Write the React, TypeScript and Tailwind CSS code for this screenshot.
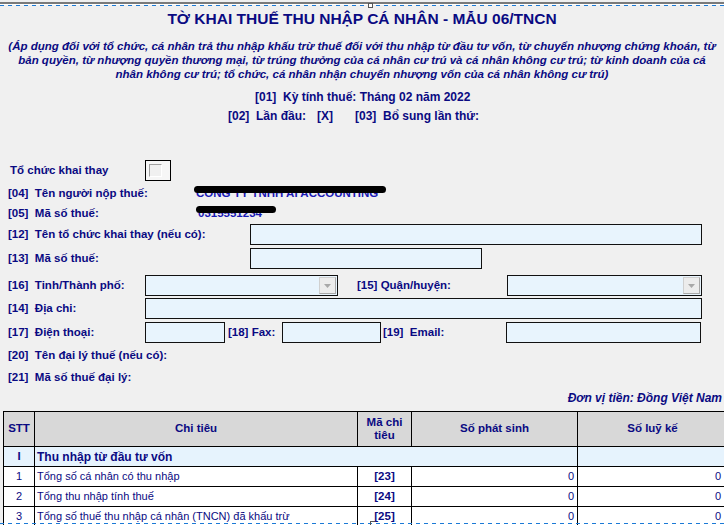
import React from 'react';

const navy = 'text-[#0a0a82]';

function Box({ className = '' }: { className?: string }) {
  return <div className={`h-[21px] border border-[#111] bg-[#e8f4fd] ${className}`} />;
}

function Select({ className = '' }: { className?: string }) {
  return (
    <div className={`h-[21px] border border-[#111] bg-[#e8f4fd] flex justify-end items-center pr-[1px] ${className}`}>
      <div className="w-[17px] h-[17px] bg-[#ececec] border border-[#d0d0d0] border-r-[#a8a8a8] border-b-[#a8a8a8] flex items-center justify-center">
        <svg width="7" height="4" viewBox="0 0 7 4"><path d="M0 0h7L3.5 4z" fill="#a8a8a8" /></svg>
      </div>
    </div>
  );
}

function Redacted({ text, barW }: { text: string; barW: number }) {
  return (
    <span className="relative inline-block text-[#1a1ab4] font-bold">
      {text}
      <span className="absolute left-[-2px] top-[1px] h-[7px] rounded-full bg-black" style={{ width: barW }} />
    </span>
  );
}

const dashed = 'h-[1px] bg-[repeating-linear-gradient(to_right,#1b7ad6_0_4px,transparent_4px_8px)]';

export default function App() {
  const rows = [
    { n: '1', t: 'Tổng số cá nhân có thu nhập', c: '[23]' },
    { n: '2', t: 'Tổng thu nhập tính thuế', c: '[24]' },
    { n: '3', t: 'Tổng số thuế thu nhập cá nhân (TNCN) đã khấu trừ', c: '[25]' },
  ];
  return (
    <div className={`relative w-[724px] h-[525px] overflow-hidden bg-[#f0f0f0] font-['Liberation_Sans',Arial,sans-serif] text-[11.5px] ${navy}`}>
      {/* top frame */}
      <div className="h-[2px]" />
      <div className="h-[2px] bg-[#7a7a7a]" />
      <div className="h-[1px] bg-white" />
      <div className={dashed} />

      <div className="h-[26px] flex items-center justify-center text-[15.5px] font-bold">
        TỜ KHAI THUẾ THU NHẬP CÁ NHÂN - MẪU 06/TNCN
      </div>

      <div className="mt-[7px] flex flex-col items-center text-[11.5px] leading-[14px] font-bold italic whitespace-nowrap">
        <span>(Áp dụng đối với tổ chức, cá nhân trả thu nhập khấu trừ thuế đối với thu nhập từ đầu tư vốn, từ chuyển nhượng chứng khoán, từ</span>
        <span>bản quyền, từ nhượng quyền thương mại, từ trúng thưởng của cá nhân cư trú và cá nhân không cư trú; từ kinh doanh của cá</span>
        <span>nhân không cư trú; tổ chức, cá nhân nhận chuyển nhượng vốn của cá nhân không cư trú)</span>
      </div>

      <div className="mt-[6px] h-[19px] flex items-center pl-[255px] text-[12px] font-bold whitespace-pre">
        {'[01]  Kỳ tính thuế: Tháng 02 năm 2022'}
      </div>
      <div className="h-[20px] flex items-center pl-[228px] text-[12px] font-bold whitespace-pre">
        <span className="w-[28px]">[02]</span>
        <span className="w-[61px]">Lần đầu:</span>
        <span className="w-[38px]">[X]</span>
        <span className="w-[28px]">[03]</span>
        <span>Bổ sung lần thứ:</span>
      </div>

      <div className="mt-[34px] h-[21px] flex items-center font-bold">
        <span className="pl-[10px] w-[145px]">Tổ chức khai thay</span>
        <div className="w-[26px] h-[21px] border border-black bg-[#f6f6f6] flex items-center pl-[3px]">
          <div className="w-[13px] h-[13px] border border-[#a0a0a0] border-r-white border-b-white bg-[#f0f0f0]" />
        </div>
      </div>

      <div className="mt-[3px] h-[20px] flex items-center font-bold whitespace-pre pl-[8px]">
        <span className="w-[188px]">{'[04]  Tên người nộp thuế:'}</span>
        <Redacted text="CÔNG TY TNHH AI ACCOUNTING" barW={192} />
      </div>
      <div className="h-[20px] flex items-center font-bold whitespace-pre pl-[8px]">
        <span className="w-[190px]">{'[05]  Mã số thuế:'}</span>
        <Redacted text="0315551234" barW={80} />
      </div>

      <div className="h-[21px] flex items-center font-bold whitespace-pre pl-[8px]">
        <span className="w-[242px]">{'[12]  Tên tổ chức khai thay (nếu có):'}</span>
        <Box className="w-[452px]" />
      </div>
      <div className="mt-[3px] h-[21px] flex items-center font-bold whitespace-pre pl-[8px]">
        <span className="w-[242px]">{'[13]  Mã số thuế:'}</span>
        <Box className="w-[232px]" />
      </div>

      <div className="mt-[6px] h-[21px] flex items-center font-bold whitespace-pre pl-[8px]">
        <span className="w-[137px]">{'[16]  Tinh/Thành phố:'}</span>
        <Select className="w-[193px]" />
        <span className="ml-[19px] w-[150px]">{'[15] Quận/huyện:'}</span>
        <Select className="w-[195px]" />
      </div>
      <div className="mt-[2px] h-[21px] flex items-center font-bold whitespace-pre pl-[8px]">
        <span className="w-[137px]">{'[14]  Địa chi:'}</span>
        <Box className="w-[557px]" />
      </div>
      <div className="mt-[3px] h-[21px] flex items-center font-bold whitespace-pre pl-[8px]">
        <span className="w-[137px]">{'[17]  Điện thoại:'}</span>
        <Box className="w-[80px]" />
        <span className="ml-[3px] w-[54px]">{'[18] Fax:'}</span>
        <Box className="w-[99px]" />
        <span className="ml-[2px] w-[123px]">{'[19]  Email:'}</span>
        <Box className="w-[195px]" />
      </div>

      <div className="mt-[3px] h-[20px] flex items-center font-bold whitespace-pre pl-[8px]">
        {'[20]  Tên đại lý thuế (nếu có):'}
      </div>
      <div className="mt-[2px] h-[20px] flex items-center font-bold whitespace-pre pl-[8px]">
        {'[21]  Mã số thuế đại lý:'}
      </div>
      <div className="h-[19px] flex items-center justify-end pr-[2px] text-[12px] font-bold italic">
        Đơn vị tiền: Đồng Việt Nam
      </div>

      <div className="mt-[4px] pl-[3px]">
        <table className="w-[724px] border-collapse table-fixed">
          <colgroup>
            <col className="w-[31px]" />
            <col className="w-[323px]" />
            <col className="w-[54px]" />
            <col className="w-[166px]" />
            <col className="w-[150px]" />
          </colgroup>
          <thead>
            <tr className="h-[35px] bg-[#d8d8d8] font-bold">
              <th className="border border-black">STT</th>
              <th className="border border-black">Chi tiêu</th>
              <th className="border border-black leading-[13px]">Mã chi<br />tiêu</th>
              <th className="border border-black">Số phát sinh</th>
              <th className="border border-black">Số luỹ kế</th>
            </tr>
          </thead>
          <tbody>
            <tr className="h-[20px] bg-[#e6f3fd] font-bold">
              <td className="border border-black text-center">I</td>
              <td className="border border-black px-[2px] text-[12px]" colSpan={3}>Thu nhập từ đầu tư vốn</td>
              <td className="border border-black" />
            </tr>
            {rows.map(r => (
              <tr key={r.n} className="h-[20px] bg-white text-[11px]">
                <td className="border border-black text-center">{r.n}</td>
                <td className="border border-black px-[2px] whitespace-nowrap">{r.t}</td>
                <td className="border border-black text-center font-bold text-[11.5px]">{r.c}</td>
                <td className="border border-black text-right pr-[3px]">0</td>
                <td className="border border-black text-right pr-[6px]">0</td>
              </tr>
            ))}
          </tbody>
        </table>
      </div>

      {/* bottom frame + handles */}
      <div className={`absolute left-0 right-0 top-[523px] ${dashed}`} />
      <div className="absolute left-[368px] top-[3px] w-[5px] h-[5px] border border-[#555] bg-white" />
      <div className="absolute left-[370px] top-[521px] w-[5px] h-[5px] border-l border-t border-[#555]" />
    </div>
  );
}
